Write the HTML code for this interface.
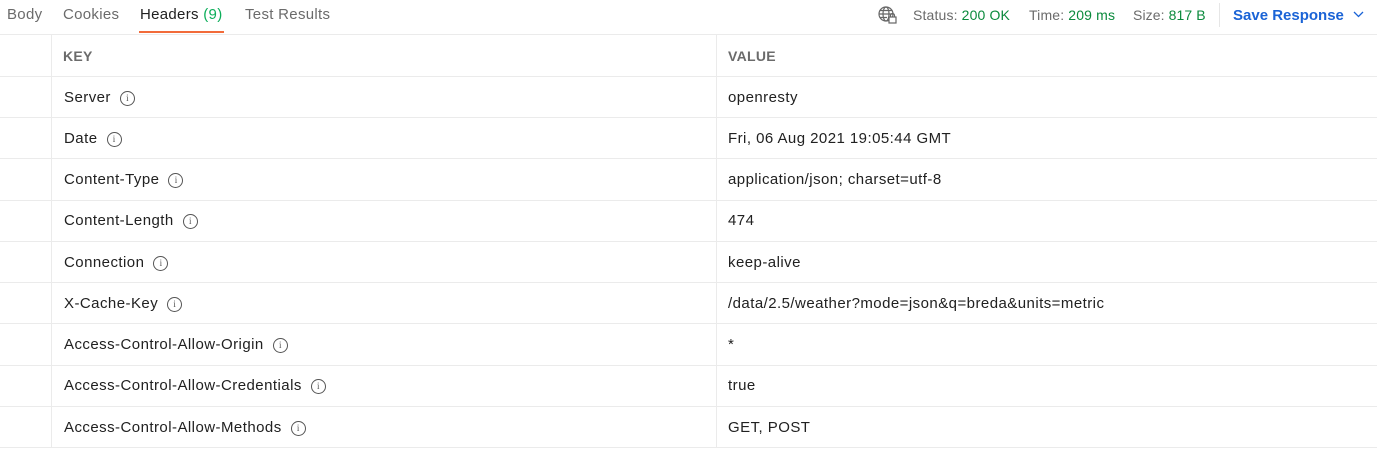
<!DOCTYPE html>
<html><head><style>
*{margin:0;padding:0;box-sizing:border-box}
body{width:1377px;height:452px;background:#fff;font-family:"Liberation Sans",sans-serif;font-size:15px;letter-spacing:0.45px;color:#212121;position:relative;overflow:hidden}
.t{position:absolute;top:6px;color:#6b6b6b;font-size:15px;letter-spacing:0.3px}
.a{position:absolute;white-space:nowrap;line-height:18px}
.hl{position:absolute;left:0;width:1377px;height:1px;background:#ebebeb}
.vl{position:absolute;width:1px;background:#ebebeb;top:35px;height:413px}
.i{display:inline-block;width:15px;height:15px;border:1.3px solid #555;border-radius:50%;font-size:9px;line-height:12px;text-align:center;color:#555;vertical-align:top;margin-top:2px;margin-left:9px;font-family:"Liberation Serif",serif;letter-spacing:0}
.g{color:#0a8a3c}
</style></head><body>
<div class="t" style="left:7px">Body</div>
<div class="t" style="left:63px">Cookies</div>
<div class="t" style="left:140px;color:#212121">Headers <span style="color:#0cae5a">(9)</span></div>
<div class="t" style="left:245px">Test Results</div>
<div style="position:absolute;left:139px;top:31px;width:85px;height:2px;background:#f26b3a"></div>
<svg style="position:absolute;left:878px;top:6px" width="20" height="18" viewBox="0 0 20 18" fill="none" stroke="#666" stroke-width="1.2"><circle cx="8" cy="8" r="7"/><ellipse cx="8" cy="8" rx="3" ry="7"/><path d="M1 8h14M2 4.5h12M2 11.5h7"/><rect x="11" y="11" width="7" height="6" fill="#fff"/><path d="M12.5 11V9.5a2 2 0 0 1 4 0V11"/></svg>
<div class="a" style="left:913px;top:6px;color:#6b6b6b;font-size:14px;letter-spacing:0.15px">Status: <span class="g">200 OK</span></div>
<div class="a" style="left:1029px;top:6px;color:#6b6b6b;font-size:14px;letter-spacing:0.15px">Time: <span class="g">209 ms</span></div>
<div class="a" style="left:1133px;top:6px;color:#6b6b6b;font-size:14px;letter-spacing:0.1px">Size: <span class="g">817 B</span></div>
<div style="position:absolute;left:1219px;top:3px;width:1px;height:24px;background:#e6e6e6"></div>
<div class="a" style="left:1233px;top:7px;color:#1a63d6;font-weight:bold;font-size:15px;letter-spacing:0px">Save Response</div>
<svg style="position:absolute;left:1353px;top:11px" width="11" height="7" viewBox="0 0 11 7"><path d="M1 1l4.5 4.5L10 1" stroke="#1a63d6" stroke-width="1.3" fill="none"/></svg>
<div class="hl" style="top:34px"></div>
<div class="vl" style="left:51px"></div>
<div class="vl" style="left:716px"></div>
<div class="a" style="left:63px;top:47px;font-weight:bold;color:#6b6b6b;font-size:14px;letter-spacing:0.3px">KEY</div>
<div class="a" style="left:728px;top:47px;font-weight:bold;color:#6b6b6b;font-size:14px;letter-spacing:0.3px">VALUE</div>
<div class="hl" style="top:76px"></div>
<div class="a" style="left:64px;top:89px">Server<span class="i">i</span></div><div class="a" style="left:728px;top:89px">openresty</div>
<div class="hl" style="top:117px"></div>
<div class="a" style="left:64px;top:130px">Date<span class="i">i</span></div><div class="a" style="left:728px;top:130px">Fri, 06 Aug 2021 19:05:44 GMT</div>
<div class="hl" style="top:158px"></div>
<div class="a" style="left:64px;top:171px">Content-Type<span class="i">i</span></div><div class="a" style="left:728px;top:171px">application/json; charset=utf-8</div>
<div class="hl" style="top:200px"></div>
<div class="a" style="left:64px;top:212px">Content-Length<span class="i">i</span></div><div class="a" style="left:728px;top:212px">474</div>
<div class="hl" style="top:241px"></div>
<div class="a" style="left:64px;top:254px">Connection<span class="i">i</span></div><div class="a" style="left:728px;top:254px">keep-alive</div>
<div class="hl" style="top:282px"></div>
<div class="a" style="left:64px;top:295px">X-Cache-Key<span class="i">i</span></div><div class="a" style="left:728px;top:295px">/data/2.5/weather?mode=json&amp;q=breda&amp;units=metric</div>
<div class="hl" style="top:323px"></div>
<div class="a" style="left:64px;top:336px">Access-Control-Allow-Origin<span class="i">i</span></div><div class="a" style="left:728px;top:336px">*</div>
<div class="hl" style="top:365px"></div>
<div class="a" style="left:64px;top:377px">Access-Control-Allow-Credentials<span class="i">i</span></div><div class="a" style="left:728px;top:377px">true</div>
<div class="hl" style="top:406px"></div>
<div class="a" style="left:64px;top:419px">Access-Control-Allow-Methods<span class="i">i</span></div><div class="a" style="left:728px;top:419px">GET, POST</div>
<div class="hl" style="top:447px"></div>
</body></html>
